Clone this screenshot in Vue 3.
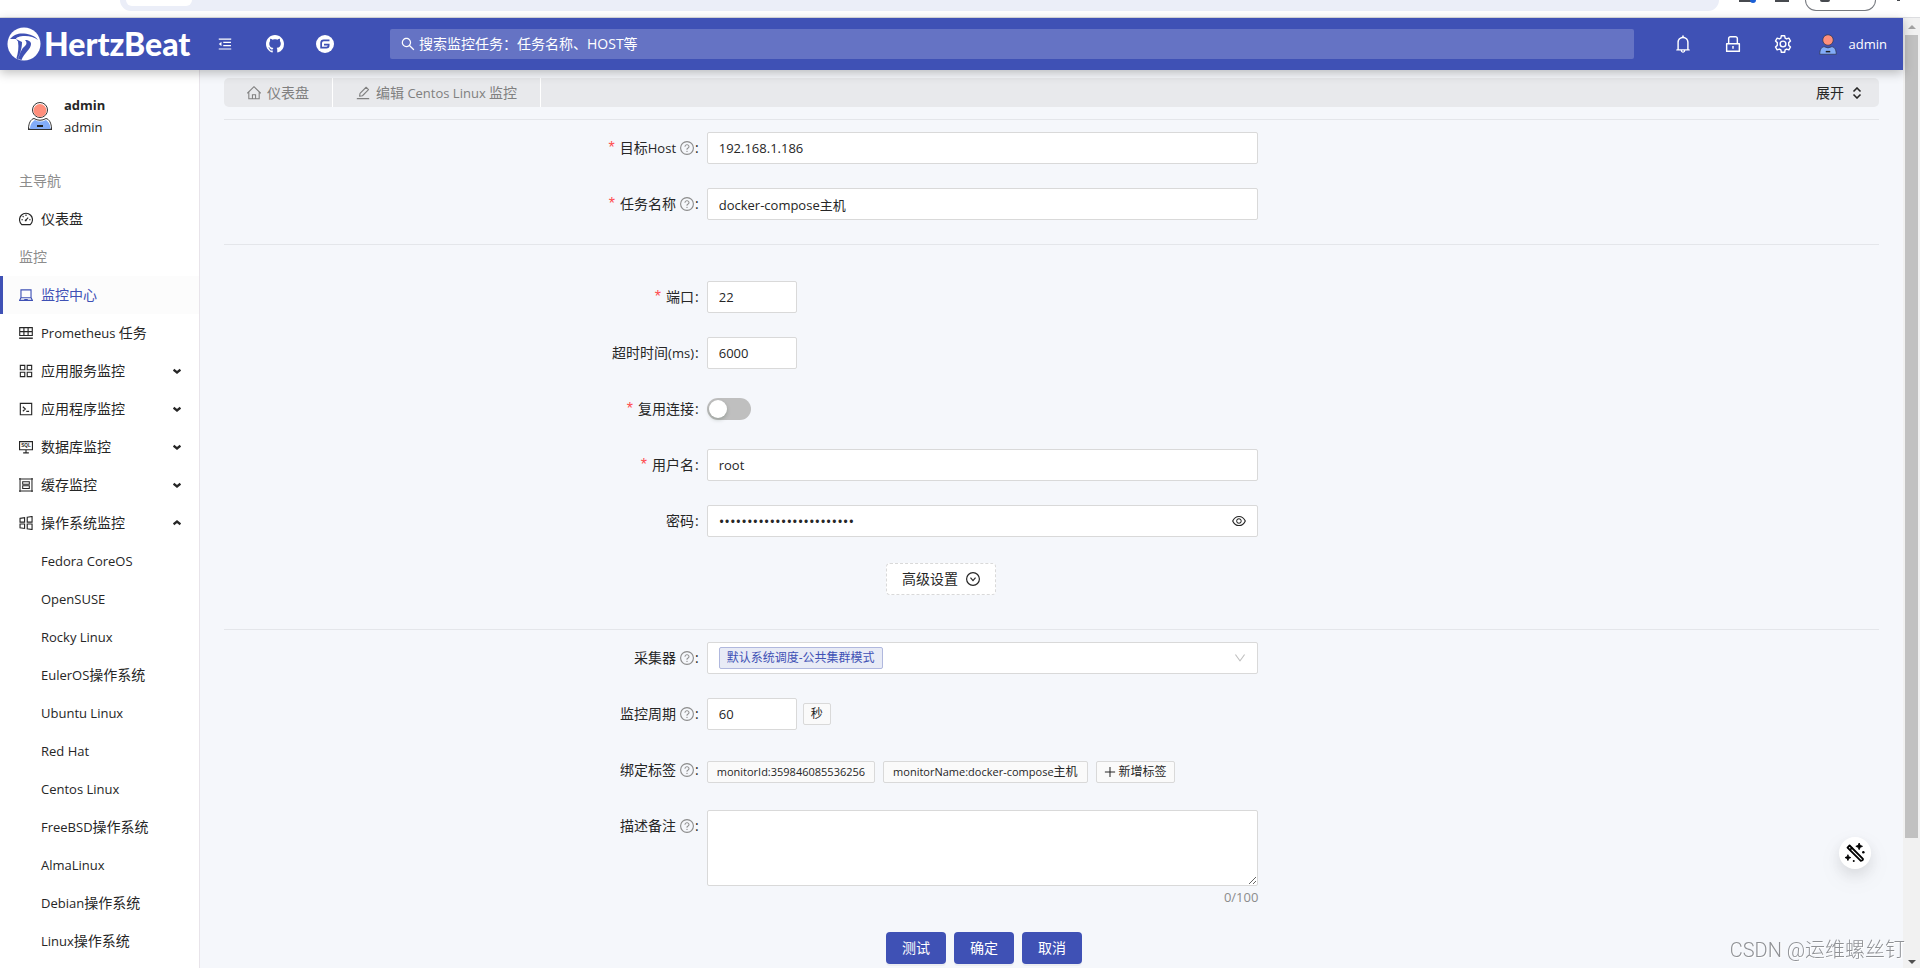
<script setup>
import { h, ref } from 'vue'

const icons = {
  fold: '<path d="M408 442h480c4.400 0 8-3.600 8-8v-56c0-4.400-3.600-8-8-8H408c-4.400 0-8 3.600-8 8v56c0 4.400 3.600 8 8 8zm-8 204c0 4.400 3.600 8 8 8h480c4.400 0 8-3.600 8-8v-56c0-4.400-3.600-8-8-8H408c-4.400 0-8 3.600-8 8v56zm504-486H120c-4.400 0-8 3.600-8 8v56c0 4.400 3.600 8 8 8h784c4.400 0 8-3.600 8-8v-56c0-4.400-3.600-8-8-8zm0 632H120c-4.400 0-8 3.600-8 8v56c0 4.400 3.600 8 8 8h784c4.400 0 8-3.600 8-8v-56c0-4.400-3.600-8-8-8zM115 519L272 642c6 5 14 0 14-7V389c0-7-8-12-14-7L115 505a9 9 0 000 14z"/>',
  github: '<path transform="translate(64 64) scale(56)" d="M8 0C3.580 0 0 3.580 0 8c0 3.540 2.290 6.530 5.470 7.590.4.070.55-.17.55-.38 0-.19-.01-.82-.01-1.490-2.010.37-2.530-.49-2.690-.94-.09-.23-.48-.94-.82-1.130-.28-.15-.68-.52-.01-.53.63-.01 1.080.58 1.230.82.72 1.210 1.870.87 2.330.66.07-.52.28-.87.51-1.070-1.780-.2-3.640-.89-3.640-3.950 0-.87.31-1.590.82-2.150-.08-.2-.36-1.020.08-2.120 0 0 .67-.21 2.200.82.64-.18 1.320-.27 2-.27s1.360.09 2 .27c1.530-1.040 2.200-.82 2.200-.82.44 1.100.16 1.920.08 2.120.51.56.82 1.270.82 2.150 0 3.070-1.870 3.750-3.650 3.950.29.25.54.73.54 1.480 0 1.070-.01 1.930-.01 2.200 0 .21.15.46.55.38A8.010 8.010 0 0016 8c0-4.420-3.580-8-8-8z"/>',
  gitee: '<circle cx="512" cy="512" r="448"/><path fill="none" stroke="#3f51b5" stroke-width="86" d="M735 330H450a130 130 0 00-130 130v234h260a115 115 0 00115-115v-38H462"/>',
  search: '<path d="M910 854L650 595C690 543 712 479 712 412c0-80-31-155-88-212-57-57-132-88-212-88s-155 31-212 88C143 257 112 332 112 412c0 80 31 155 88 212C257 681 332 712 412 712c67 0 131-22 183-62l259 260a8 8 0 0012 0l44-44a8 8 0 000-12zM570 570C528 613 472 636 412 636s-116-23-158-66C211 528 188 472 188 412s23-116 66-158C296 211 352 188 412 188s116 23 158 66S636 352 636 412s-23 116-66 158z"/>',
  bell: '<path d="M816 768h-24V428c0-141-104-258-240-277v-39c0-22-18-40-40-40s-40 18-40 40v39c-136 19-240 136-240 277v340h-24c-18 0-32 14-32 32v32c0 4 4 8 8 8h216c0 62 50 112 112 112s112-50 112-112h216c4 0 8-4 8-8v-32c0-18-14-32-32-32zM512 888c-26 0-48-21-48-48h96c0 27-21 48-48 48zM304 768V428c0-56 22-108 61-147S456 220 512 220c56 0 108 22 147 61S720 372 720 428v340H304z"/>',
  lock: '<path d="M832 464h-68V240c0-71-57-128-128-128H388c-71 0-128 57-128 128v224h-68c-18 0-32 14-32 32v384c0 18 14 32 32 32h640c18 0 32-14 32-32V496c0-18-14-32-32-32zM332 240c0-31 25-56 56-56h248c31 0 56 25 56 56v224H332V240zm460 600H232V536h560v304zM484 701v53c0 4 4 8 8 8h40c4 0 8-4 8-8v-53a48 48 0 10-56 0z"/>',
  gear: '<g fill="none" stroke="currentColor" stroke-width="70" stroke-linejoin="round"><path d="M430 100h164l24 118 72 42 114-38 82 142-90 80v136l90 80-82 142-114-38-72 42-24 118H430l-24-118-72-42-114 38-82-142 90-80V444l-90-80 82-142 114 38 72-42z"/><circle cx="512" cy="512" r="142"/></g>',
  home: '<g fill="none" stroke="currentColor" stroke-width="68"><path d="M84 532L512 108l428 424M180 470v410h664V470M412 880V620h200v260"/></g>',
  edit: '<path d="M880 836H144c-18 0-32 14-32 32v36c0 4 4 8 8 8h784c4 0 8-4 8-8v-36c0-18-14-32-32-32z"/><path fill="none" stroke="currentColor" stroke-width="70" stroke-linejoin="round" d="M290 720l32-186 390-390 154 154-390 390z"/>',
  help: '<circle cx="512" cy="512" r="410" fill="none" stroke="currentColor" stroke-width="72"/><path d="M624 317C594 290 554 276 512 276s-82 14-112 41C369 344 352 381 352 420v8c0 4 4 8 8 8h48c4 0 8-4 8-8v-8c0-44 43-80 96-80s96 36 96 80c0 31-22 60-56 73-21 8-39 22-52 41-13 19-20 41-20 64v22c0 4 4 8 8 8h48c4 0 8-4 8-8v-23a48 48 0 0131-45c59-22 97-74 97-132 0-39-17-76-48-103zM472 732a40 40 0 1080 0 40 40 0 10-80 0z"/>',
  eye: '<path d="M942 486C847 286 704 186 512 186c-192 0-335 100-430 300a60 60 0 000 52C177 738 320 838 512 838c192 0 335-100 430-300 8-17 8-35 0-52zM512 766c-161 0-279-82-363-254C233 340 351 258 512 258c161 0 279 82 363 254C791 684 673 766 512 766zm-4-430c-97 0-176 79-176 176s79 176 176 176 176-79 176-176-79-176-176-176zm0 288c-62 0-112-50-112-112s50-112 112-112 112 50 112 112-50 112-112 112z"/>',
  down: '<path d="M884 256h-75c-5 0-10 3-13 7L512 654 228 263c-3-4-8-7-13-7h-75c-6 0-10 7-6 13l352 486c13 17 39 17 52 0l352-486c4-6 0-13-6-13z"/>',
  downCircle: '<g fill="none" stroke="currentColor" stroke-width="76"><circle cx="512" cy="512" r="410"/><path d="M350 420l162 190 162-190"/></g>',
  plus: '<path fill="none" stroke="currentColor" stroke-width="76" d="M512 130v764M130 512h764"/>',
  dashboard: '<g fill="none" stroke="currentColor" stroke-width="72"><path d="M236 870A415 415 0 11788 870z" stroke-linejoin="round"/><path d="M490 600l160-170M512 230v90M300 330l58 58M220 560h90M715 560h90"/></g><circle cx="490" cy="600" r="60"/>',
  laptop: '<g fill="none" stroke="currentColor" stroke-width="72"><path d="M190 700V180h644v520M190 690h644M180 700L104 852h816L844 700M400 800h224"/></g>',
  table: '<g fill="none" stroke="currentColor" stroke-width="72"><path d="M110 170h804v500H110zM110 420h804M378 170v500M646 170v500"/></g><path d="M75 800h874v90H75z"/>',
  apps: '<g fill="none" stroke="currentColor" stroke-width="72"><path d="M150 150h284v284H150zM590 150h284v284H590zM150 590h284v284H150zM590 590h284v284H590z"/></g>',
  code: '<g fill="none" stroke="currentColor" stroke-width="72"><path d="M148 148h728v728H148zM310 370l160 142-160 142M530 660h180"/></g>',
  sql: '<g fill="none" stroke="currentColor" stroke-width="72"><path d="M100 170h824v520H100zM512 690v190M330 890h364"/></g><text x="512" y="535" text-anchor="middle" font-family="Liberation Sans, sans-serif" font-weight="700" font-size="300" fill="currentColor">SQL</text>',
  cache: '<g fill="none" stroke="currentColor" stroke-width="66"><path d="M64 130h896M64 894h896M130 64v896M894 64v896M300 300h424v170H300zM300 560h424v170H300z"/></g>',
  windows: '<g fill="none" stroke="currentColor" stroke-width="72"><path d="M130 215l290-46v290H130zM590 145l310-49v363H590zM130 575h290v285l-290-46zM590 575h310v355l-310-50z"/></g>',
  updown: '<path fill="none" stroke="currentColor" stroke-width="120" d="M250 400l262-260 262 260M250 624l262 260 262-260"/>',
  chevron: '<path fill="none" stroke="currentColor" stroke-width="270" d="M120 370l392 300 392-300"/>'
}

const Icon = (props) =>
  h('svg', { class: 'icon', viewBox: '64 64 896 896', 'aria-hidden': 'true', innerHTML: icons[props.name] })
Icon.props = ['name']

// Latin runs are set one pixel smaller than the Chinese runs around them
const Mixed = (props) =>
  h('span', props.text.split(/([\x20-\x7e]+)/).filter(Boolean).map((run) =>
    /[\x20-\x7e]/.test(run) ? h('span', { class: 'latin' }, run) : run))
Mixed.props = ['text']

const groups = [
  { icon: 'apps', text: '应用服务监控' },
  { icon: 'code', text: '应用程序监控' },
  { icon: 'sql', text: '数据库监控' },
  { icon: 'cache', text: '缓存监控' },
  { icon: 'windows', text: '操作系统监控', open: true }
]
const systems = ['Fedora CoreOS', 'OpenSUSE', 'Rocky Linux', 'EulerOS操作系统', 'Ubuntu Linux', 'Red Hat',
  'Centos Linux', 'FreeBSD操作系统', 'AlmaLinux', 'Debian操作系统', 'Linux操作系统']

const form = ref({
  host: '192.168.1.186',
  name: 'docker-compose主机',
  port: '22',
  timeout: '6000',
  reuse: false,
  user: 'root',
  password: 'x'.repeat(24),
  collector: '默认系统调度-公共集群模式',
  interval: '60',
  note: ''
})
</script>

<template>
  <div class="window">
    <div class="browser">
      <div class="omnibox"><span class="chip"></span></div>
      <span class="ext blue"></span>
      <span class="ext"></span>
      <span class="profile"><i></i></span>
      <span class="more"></span>
    </div>

    <div class="viewport">
      <div class="app">
        <header class="header">
          <a class="logo" href="#">
            <svg class="mark" viewBox="0 0 34 34" aria-hidden="true">
              <circle cx="17" cy="17" r="16.500" fill="#fff" />
              <path d="M3 12C7 7 12 6 17 6.500C23 7 28 9 31 13C27 10 22 8.500 16 9C11 9.500 9 11 9 12L11 14.500C12 21 11 26 9.500 31L11 32.500C13 27 14 22 18 19C20 17 20 15 18 13C22 13 24 15 24 17C24 22 17 26 14.500 33L11 32C13 26 15 22 15 15L9 12Z" fill="#3f51b5" />
            </svg>
            <span class="brand">HertzBeat</span>
          </a>
          <button class="tool" aria-label="折叠菜单"><Icon name="fold" class="i14" /></button>
          <a class="tool" href="#" aria-label="GitHub"><Icon name="github" class="i18" /></a>
          <a class="tool" href="#" aria-label="Gitee"><Icon name="gitee" class="i18" /></a>
          <div class="search">
            <Icon name="search" class="i14" />
            <input type="text" aria-label="搜索" placeholder="搜索监控任务：任务名称、HOST等" />
          </div>
          <button class="tool" aria-label="通知"><Icon name="bell" class="i18" /></button>
          <button class="tool" aria-label="锁屏"><Icon name="lock" class="i18" /></button>
          <button class="tool" aria-label="设置"><Icon name="gear" class="i18" /></button>
          <button class="account">
            <svg class="face" viewBox="0 0 24 28" aria-hidden="true">
              <circle cx="12" cy="8" r="7" fill="#ff8f7c" stroke="#333a50" />
              <path d="M1 27C1 20 4 17 7 17Q12 20 17 17C20 17 23 20 23 27Z" fill="#82acf9" stroke="#333a50" />
              <path d="M9 23.500h6" stroke="#222" stroke-width="2" />
            </svg>
            <span>admin</span>
          </button>
        </header>

        <div class="body">
          <aside class="sidebar">
            <div class="user">
              <svg class="avatar" viewBox="0 0 24 28" aria-hidden="true">
                <circle cx="12" cy="8" r="7.500" fill="#fff" stroke="#333" />
                <circle cx="12" cy="8.500" r="6.500" fill="#ff8f7c" />
                <path d="M.5 27C.5 21 3 17 6 16.500Q12 20 18 16.500C21 17 23.500 21 23.500 27Z" fill="#fff" stroke="#333" />
                <path d="M2 27C2 22 5 19 7 18Q12 21 18 18C21 20 22.500 23 22.500 27Z" fill="#82acf9" />
                <path d="M0 27.500h24" stroke="#333" />
                <path d="M9 24h6" stroke="#222" stroke-width="2" />
              </svg>
              <div><strong>admin</strong><span>admin</span></div>
            </div>
            <nav class="menu">
              <div class="caption">主导航</div>
              <a class="item" href="#"><Icon name="dashboard" class="i14" /><Mixed text="仪表盘" /></a>
              <div class="caption">监控</div>
              <a class="item active" href="#"><Icon name="laptop" class="i14" /><Mixed text="监控中心" /></a>
              <a class="item" href="#"><Icon name="table" class="i14" /><Mixed text="Prometheus 任务" /></a>
              <button v-for="g in groups" :key="g.text" class="item" :aria-expanded="!!g.open">
                <Icon :name="g.icon" class="i14" /><Mixed :text="g.text" />
                <Icon name="chevron" class="arrow" :class="{ up: g.open }" />
              </button>
              <a v-for="s in systems" :key="s" class="item sub" href="#"><Mixed :text="s" /></a>
            </nav>
          </aside>

          <main class="content">
            <div class="tabs">
              <a class="tab" href="#"><Icon name="home" class="i14" /><Mixed text="仪表盘" /></a>
              <a class="tab" href="#"><Icon name="edit" class="i14" /><Mixed text="编辑 Centos Linux 监控" /></a>
              <button class="expand"><span>展开</span><Icon name="updown" class="i12" /></button>
            </div>

            <form @submit.prevent>
              <section>
                <div class="row">
                  <label for="host"><b>*</b><Mixed text="目标Host" /><Icon name="help" class="help" /><i>:</i></label>
                  <input id="host" v-model="form.host" class="field" type="text" />
                </div>
                <div class="row">
                  <label for="name"><b>*</b><Mixed text="任务名称" /><Icon name="help" class="help" /><i>:</i></label>
                  <input id="name" v-model="form.name" class="field" type="text" />
                </div>
              </section>

              <section class="params">
                <div class="row">
                  <label for="port"><b>*</b><Mixed text="端口" /><i>:</i></label>
                  <input id="port" v-model="form.port" class="field short" type="text" />
                </div>
                <div class="row">
                  <label for="timeout"><Mixed text="超时时间(ms)" /><i>:</i></label>
                  <input id="timeout" v-model="form.timeout" class="field short" type="text" />
                </div>
                <div class="row">
                  <label for="reuse"><b>*</b><Mixed text="复用连接" /><i>:</i></label>
                  <input id="reuse" v-model="form.reuse" class="switch" type="checkbox" role="switch" />
                </div>
                <div class="row">
                  <label for="user"><b>*</b><Mixed text="用户名" /><i>:</i></label>
                  <input id="user" v-model="form.user" class="field" type="text" autocomplete="off" />
                </div>
                <div class="row">
                  <label for="password"><Mixed text="密码" /><i>:</i></label>
                  <div class="field box">
                    <input id="password" v-model="form.password" type="password" autocomplete="off" />
                    <button type="button" class="bare" aria-label="显示密码"><Icon name="eye" class="i14" /></button>
                  </div>
                </div>
                <div class="actions advanced">
                  <button type="button" class="dashed"><span>高级设置</span><Icon name="downCircle" class="i14" /></button>
                </div>
              </section>

              <section>
                <div class="row">
                  <label for="collector"><Mixed text="采集器" /><Icon name="help" class="help" /><i>:</i></label>
                  <div class="field box">
                    <select id="collector" v-model="form.collector" class="tag picked">
                      <option>默认系统调度-公共集群模式</option>
                    </select>
                    <Icon name="down" class="caret" />
                  </div>
                </div>
                <div class="row">
                  <label for="interval"><Mixed text="监控周期" /><Icon name="help" class="help" /><i>:</i></label>
                  <div class="line">
                    <input id="interval" v-model="form.interval" class="field short" type="text" />
                    <span class="tag unit">秒</span>
                  </div>
                </div>
                <div class="row">
                  <label for="add-tag"><Mixed text="绑定标签" /><Icon name="help" class="help" /><i>:</i></label>
                  <div class="line tags">
                    <span class="tag"><Mixed text="monitorId:359846085536256" /></span>
                    <span class="tag"><Mixed text="monitorName:docker-compose主机" /></span>
                    <button id="add-tag" type="button" class="tag"><Icon name="plus" class="i12" />新增标签</button>
                  </div>
                </div>
                <div class="row top">
                  <label for="note"><Mixed text="描述备注" /><Icon name="help" class="help" /><i>:</i></label>
                  <div class="note">
                    <textarea id="note" v-model="form.note" class="field" maxlength="100"></textarea>
                    <span class="count">{{ form.note.length }}/100</span>
                  </div>
                </div>
                <div class="actions">
                  <button type="button" class="primary">测试</button>
                  <button type="submit" class="primary">确定</button>
                  <button type="button" class="primary">取消</button>
                </div>
              </section>
            </form>
          </main>
        </div>
      </div>

      <div class="scrollbar" aria-hidden="true">
        <span class="tri"></span>
        <span class="track"><span class="thumb"></span></span>
        <span class="tri low"></span>
      </div>
    </div>

    <button class="fab" aria-label="主题">
      <svg viewBox="0 0 24 24" aria-hidden="true">
        <g fill="none" stroke="#000" stroke-width="2.200" stroke-linejoin="round">
          <path d="M3 5.500L5.500 3L21.500 19Q22 21 19 21.500Z" />
          <path d="M5.500 8.500L9 5.500" />
        </g>
        <path d="M17 0l1.200 2.800L21 4l-2.800 1.200L17 8l-1.200-2.800L13 4l2.800-1.200zM3.500 14l1 2.500L7 17.500l-2.500 1-1 2.500-1-2.500L0 17.500l2.500-1z" stroke="#000" />
        <circle cx="22" cy="11" r="1.500" /><circle cx="10.500" cy="21.500" r="1.200" />
      </svg>
    </button>
    <div class="watermark">CSDN @运维螺丝钉</div>
  </div>
</template>

<style>
body {
  margin: 0;
}
.latin {
  font-size: 13px;
}
.tag .latin {
  font-size: 11px;
}
</style>

<style scoped>
.window,
.window * {
  box-sizing: border-box;
}
.window {
  display: flex;
  flex-direction: column;
  height: 100vh;
  overflow: hidden;
  background: #fff;
  color: #262626;
  font: 14px/22px "Open Sans", "Noto Sans CJK SC", sans-serif;
}
button,
input,
select,
textarea {
  margin: 0;
  padding: 0;
  border: 0;
  background: none;
  color: inherit;
  font: inherit;
  outline: none;
}
a {
  color: inherit;
  text-decoration: none;
}
.icon {
  flex: none;
  display: block;
  fill: currentColor;
}
.i12 { width: 12px; height: 12px; }
.i14 { width: 14px; height: 14px; }
.i18 { width: 18px; height: 18px; }

/* browser edge */
.browser {
  flex: none;
  display: flex;
  align-items: flex-start;
  height: 18px;
  padding: 0 20px 0 120px;
  border-bottom: 1px solid #dcdde0;
  overflow: hidden;
}
.omnibox {
  flex: 1;
  height: 11px;
  margin-right: 20px;
  padding-left: 6px;
  border-radius: 0 0 18px 18px;
  background: #ebeef8;
}
.chip {
  display: block;
  width: 66px;
  height: 6px;
  border-radius: 0 0 9px 9px;
  background: #fff;
}
.ext {
  position: relative;
  width: 14px;
  height: 2px;
  margin-right: 16px;
  background: #474a4f;
}
.ext.blue {
  margin-right: 22px;
}
.ext.blue::after {
  content: "";
  position: absolute;
  right: -3px;
  top: -3px;
  width: 6px;
  height: 6px;
  border-radius: 50%;
  background: #1a5fd6;
}
.profile {
  width: 71px;
  height: 11px;
  padding-left: 14px;
  border: 1px solid #777a80;
  border-top: 0;
  border-radius: 0 0 16px 16px;
}
.profile i {
  display: block;
  width: 10px;
  height: 2px;
  border-radius: 0 0 5px 5px;
  background: #474a4f;
}
.more {
  width: 3px;
  height: 1px;
  margin-left: 21px;
  background: #474a4f;
}

.viewport {
  flex: 1;
  min-height: 0;
  display: flex;
}
.app {
  flex: 1;
  min-width: 0;
  display: flex;
  flex-direction: column;
}

/* header */
.header {
  position: relative;
  z-index: 2;
  flex: none;
  display: flex;
  align-items: center;
  height: 52px;
  background: #3f51b5;
  color: #fff;
  box-shadow: 0 3px 10px rgba(0, 0, 0, 0.25);
}
.logo {
  display: flex;
  align-items: center;
  gap: 3px;
  width: 200px;
  padding-left: 7px;
}
.mark {
  flex: none;
  width: 34px;
  height: 34px;
}
.brand {
  font: 900 32px/38px Lato, sans-serif;
}
.tool {
  display: flex;
  align-items: center;
  justify-content: center;
  width: 50px;
  height: 52px;
}
.search {
  flex: 1;
  display: flex;
  align-items: center;
  gap: 4px;
  height: 30px;
  margin: 0 24px 0 40px;
  padding: 0 11px;
  border-radius: 2px;
  background: #6573c4;
}
.search input {
  flex: 1;
}
.search input::placeholder {
  color: #fff;
  opacity: 1;
}
.account {
  display: flex;
  align-items: center;
  gap: 12px;
  padding: 0 16px 0 11px;
  font-size: 13px;
}
.face {
  width: 18px;
  height: 21px;
}

.body {
  flex: 1;
  min-height: 0;
  display: flex;
}

/* sidebar */
.sidebar {
  flex: none;
  width: 200px;
  overflow: hidden;
  border-right: 1px solid #e8e4ea;
  background: #fff;
}
.user {
  display: flex;
  align-items: center;
  gap: 12px;
  height: 92px;
  padding: 0 28px;
  font-size: 13px;
}
.avatar {
  width: 24px;
  height: 28px;
}
.user strong,
.user span {
  display: block;
}
.caption,
.item {
  display: flex;
  align-items: center;
  gap: 8px;
  width: 100%;
  height: 38px;
  padding: 0 16px 0 19px;
  text-align: left;
}
.caption {
  color: #8c8c8c;
}
.item.active {
  padding-left: 16px;
  border-left: 3px solid #3f51b5;
  background: #fcfcfc;
  color: #3f51b5;
}
.item.sub {
  padding-left: 41px;
}
.arrow {
  width: 8px;
  height: 8px;
  margin: 0 2px 0 auto;
}
.arrow.up {
  transform: rotate(180deg);
}

/* content */
.content {
  flex: 1;
  min-width: 0;
  padding: 8px 24px 0;
  overflow: hidden;
  background: #f5f7fb;
}
.tabs {
  display: flex;
  height: 29px;
  margin-bottom: 12px;
  border-radius: 5px;
  background: #e8e9ec;
}
.tab {
  display: flex;
  align-items: center;
  gap: 6px;
  padding: 0 23px;
  border-right: 1px solid #fff;
  color: #808080;
}
.expand {
  display: flex;
  align-items: center;
  gap: 7px;
  margin-left: auto;
  padding: 0 16px;
}
section {
  padding: 12px 0 24px;
  border-top: 1px solid #e4e6ea;
}
.params {
  padding: 36px 0 34px;
}
.row {
  display: grid;
  grid-template-columns: 7fr 8fr 9fr;
  align-items: center;
  min-height: 32px;
  margin-bottom: 24px;
}
section:first-child .row:last-child {
  margin-bottom: 0;
}
.row.top {
  align-items: start;
}
.row label {
  display: flex;
  align-items: center;
  justify-content: flex-end;
  height: 32px;
  padding-right: 8px;
}
.row label b {
  margin-right: 5px;
  color: #ff4d4f;
  font: 16px/22px "Liberation Sans", sans-serif;
}
.row label i {
  margin-left: 1px;
  font-style: normal;
}
.help {
  width: 14px;
  height: 14px;
  margin-left: 4px;
  color: #8c8c8c;
}
.field {
  width: 100%;
  height: 32px;
  padding: 4px 11px;
  border: 1px solid #d9d9d9;
  border-radius: 2px;
  background: #fff;
  font-size: 13px;
}
.short {
  width: 90px;
}
.box {
  display: flex;
  align-items: center;
  justify-content: space-between;
}
.box input {
  flex: 1;
  font-size: 15px;
}
.bare {
  display: flex;
}
.caret {
  width: 12px;
  height: 12px;
  color: #bfbfbf;
}
.switch {
  appearance: none;
  display: flex;
  align-items: center;
  width: 44px;
  height: 22px;
  padding: 2px;
  border-radius: 11px;
  background: #bfbfbf;
}
.switch::before {
  content: "";
  width: 18px;
  height: 18px;
  border-radius: 50%;
  background: #fff;
  box-shadow: 0 2px 4px rgba(0, 35, 11, 0.2);
}
.switch:checked {
  justify-content: flex-end;
  background: #3f51b5;
}
.line {
  display: flex;
  align-items: center;
  gap: 6px;
}
.tags {
  gap: 8px;
  padding-top: 4px;
}
.tag {
  display: flex;
  align-items: center;
  height: 22px;
  padding: 0 7px;
  border: 1px solid #d9d9d9;
  border-radius: 2px;
  background: #fafafa;
  font-size: 12px;
  line-height: 20px;
  white-space: nowrap;
}
.tags span.tag {
  padding: 0 9px;
}
.tag .i12 {
  margin-right: 3px;
}
.picked {
  appearance: none;
  border-color: #b0b8de;
  background: #e8ebf6;
  color: #3f51b5;
}
.note {
  display: flex;
  flex-direction: column;
}
.note textarea {
  height: 76px;
  resize: vertical;
}
.count {
  height: 22px;
  color: #8c8c8c;
  font-size: 13px;
  text-align: right;
}
.actions {
  display: flex;
  gap: 8px;
  padding-left: 40%;
}
.advanced {
  padding-top: 2px;
}
.dashed {
  display: flex;
  align-items: center;
  gap: 8px;
  height: 32px;
  padding: 0 15px;
  border: 1px dashed #d9d9d9;
  border-radius: 4px;
  background: #fff;
}
.primary {
  height: 32px;
  padding: 0 16px;
  border-radius: 4px;
  background: #3f51b5;
  color: #fff;
  box-shadow: 0 2px 0 rgba(0, 0, 0, 0.04);
}

/* scrollbar */
.scrollbar {
  flex: none;
  display: flex;
  flex-direction: column;
  align-items: center;
  width: 17px;
  padding: 7px 0 4px;
  background: #f1f1f1;
}
.tri {
  border: 4px solid transparent;
  border-top: 0;
  border-bottom-color: #a3a3a3;
}
.tri.low {
  border-top: 4px solid #505050;
  border-bottom: 0;
}
.track {
  flex: 1;
  width: 13px;
  margin: 6px 0 2px;
}
.thumb {
  display: block;
  height: 87%;
  background: #c1c1c1;
}

.fab {
  position: fixed;
  z-index: 3;
  right: 49px;
  bottom: 99px;
  display: flex;
  align-items: center;
  justify-content: center;
  width: 32px;
  height: 32px;
  border-radius: 50%;
  background: #fff;
  box-shadow: 0 6px 16px rgba(0, 0, 0, 0.1), 0 9px 28px rgba(0, 0, 0, 0.06);
}
.fab svg {
  width: 20px;
  height: 20px;
}
.watermark {
  position: fixed;
  z-index: 3;
  right: 15px;
  bottom: 4px;
  color: #909296;
  font: 20px/28px Roboto, "Noto Sans CJK SC", sans-serif;
  font-weight: 300;
  text-shadow: 1px 1px 0 #fff;
}
</style>
